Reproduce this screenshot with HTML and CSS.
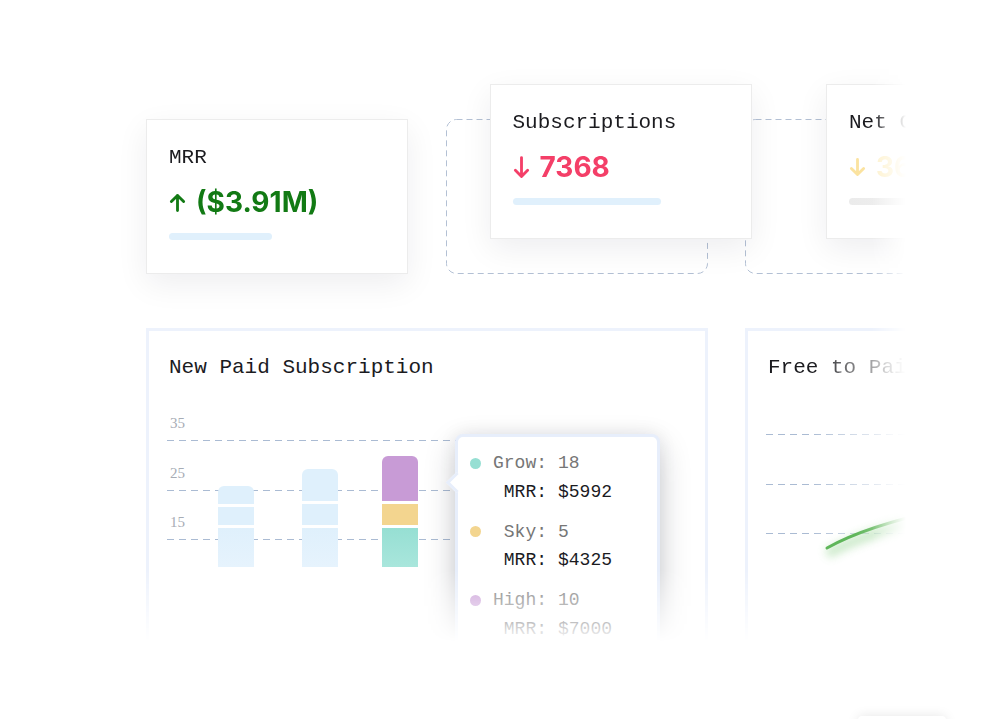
FILE: index.html
```html
<!DOCTYPE html>
<html lang="en">
<head>
    <meta charset="UTF-8">
    <meta name="viewport" content="width=device-width, initial-scale=1.0">
    <title>Subscription Metrics</title>
    <link rel="stylesheet" href="styles.css">
</head>
<body>
    <div class="scene">
        <div class="stat-row">
            <div class="stat-card">
                <p class="stat-title">MRR</p>
                <p class="stat-value up">
                    <svg class="arrow" viewBox="0 0 18 20"><path d="M9 18.5V2.5M2.5 9L9 2.5L15.5 9"/></svg>
                    ($3.91M)
                </p>
                <div class="stat-bar"></div>
            </div>

            <div class="slot">
                <svg class="slot-outline" width="262" height="155"><rect x="0.5" y="0.5" width="261" height="154" rx="10"/></svg>
                <div class="stat-card lifted">
                    <p class="stat-title">Subscriptions</p>
                    <p class="stat-value down">
                        <svg class="arrow tall" viewBox="0 0 18 24"><path d="M9 1.5V21.5M2.5 15L9 21.5L15.5 15"/></svg>
                        7368
                    </p>
                    <div class="stat-bar long"></div>
                </div>
            </div>

            <div class="slot">
                <svg class="slot-outline" width="262" height="155"><rect x="0.5" y="0.5" width="261" height="154" rx="10"/></svg>
                <div class="stat-card lifted far">
                    <p class="stat-title">Net Churn</p>
                    <p class="stat-value pale">
                        <svg class="arrow" viewBox="0 0 18 20"><path d="M9 1.5V17.5M2.5 11L9 17.5L15.5 11"/></svg>
                        <span>364</span>
                    </p>
                    <div class="stat-bar long grey"></div>
                </div>
            </div>
        </div>

        <div class="chart-row">
            <div class="chart-card wide">
                <h3 class="chart-title">New Paid Subscription</h3>
                <div class="plot">
                    <div class="gridlines short">
                        <div class="gridline"><span>35</span><i></i></div>
                        <div class="gridline"><span>25</span><i></i></div>
                        <div class="gridline"><span>15</span><i></i></div>
                    </div>
                    <div class="bars">
                        <div class="bar">
                            <div class="seg" style="height:18px"></div>
                            <div class="seg" style="height:18px"></div>
                            <div class="seg" style="height:39px"></div>
                        </div>
                        <div class="bar">
                            <div class="seg" style="height:32px"></div>
                            <div class="seg" style="height:21px"></div>
                            <div class="seg" style="height:39px"></div>
                        </div>
                        <div class="bar">
                            <div class="seg high" style="height:45px"></div>
                            <div class="seg sky" style="height:21px"></div>
                            <div class="seg grow" style="height:39px"></div>
                        </div>
                    </div>
                </div>

                <div class="tooltip">
                    <div class="tip-group">
                        <span class="dot grow"></span><span class="tip-label">Grow:</span><span class="tip-num">18</span>
                        <span></span><span class="tip-label dark">MRR:</span><span class="tip-num dark">$5992</span>
                    </div>
                    <div class="tip-group">
                        <span class="dot sky"></span><span class="tip-label">Sky:</span><span class="tip-num">5</span>
                        <span></span><span class="tip-label dark">MRR:</span><span class="tip-num dark">$4325</span>
                    </div>
                    <div class="tip-group">
                        <span class="dot high"></span><span class="tip-label">High:</span><span class="tip-num">10</span>
                        <span></span><span class="tip-label dark">MRR:</span><span class="tip-num dark">$7000</span>
                    </div>
                </div>
            </div>

            <div class="chart-card">
                <h3 class="chart-title fade-x">Free to Paid</h3>
                <div class="plot shifted">
                    <div class="gridlines fade-x">
                        <div class="gridline"><span></span><i></i></div>
                        <div class="gridline"><span></span><i></i></div>
                        <div class="gridline"><span></span><i></i></div>
                    </div>
                    <svg class="trend" width="240" height="153">
                        <defs>
                            <filter id="glow" x="-20%" y="-50%" width="140%" height="200%"><feGaussianBlur stdDeviation="4"/></filter>
                            <linearGradient id="trend-fade" x1="0" x2="1" y1="0" y2="0">
                                <stop offset="0.25" stop-color="#5fb65a"/>
                                <stop offset="0.75" stop-color="#b9dfb4"/>
                            </linearGradient>
                        </defs>
                        <path class="trend-glow" d="M61 146Q100 124 175 108" filter="url(#glow)"/>
                        <path class="trend-line" d="M61 140Q100 118 175 102"/>
                    </svg>
                </div>
            </div>
        </div>
    </div>

    <div class="peek"></div>
</body>
</html>
```

FILE: styles.css
```css
* {
    box-sizing: border-box;
}
body {
    margin: 0;
    background: #fff;
    overflow: hidden;
    font-family: "Liberation Mono", "DejaVu Sans Mono", monospace;
    color: #1b1b1f;
}
.scene {
    width: 1010px;
    padding: 119px 0 0 146px;
    -webkit-mask-image: linear-gradient(to right, #000 872px, transparent 906px);
    mask-image: linear-gradient(to right, #000 872px, transparent 906px);
}

/* stat cards */
.stat-row {
    display: grid;
    grid-template-columns: repeat(3, 262px);
    column-gap: 37.5px;
}
.stat-card {
    height: 155px;
    background: #fff;
    border: 1px solid #ececec;
    padding: 25px 0 0 22px;
    box-shadow: 0 10px 30px rgba(20, 20, 40, 0.07);
}
.stat-title {
    margin: 0;
    font-size: 21px;
    line-height: 25px;
}
.stat-value {
    margin: 15px 0 0;
    display: flex;
    align-items: center;
    gap: 10px;
    font-family: Inter, "Liberation Sans", sans-serif;
    font-weight: 700;
    font-size: 28px;
    line-height: 34px;
}
.arrow {
    width: 17px;
    height: 19px;
    fill: none;
    stroke: currentColor;
    stroke-width: 3;
    stroke-linecap: round;
    stroke-linejoin: round;
}
.arrow.tall {
    height: 23px;
}
.up {
    color: #127a14;
}
.down {
    color: #f43f68;
}
.pale {
    color: #fbe3a0;
}
.pale span {
    color: #fdf1cc;
}
.stat-bar {
    margin-top: 14px;
    width: 103px;
    height: 7px;
    border-radius: 4px;
    background: #e0f0fc;
}
.stat-bar.long {
    width: 148px;
}
.stat-bar.grey {
    background: linear-gradient(to right, #ebebeb, #f6f6f6);
}
.slot {
    position: relative;
    height: 155px;
}
.slot-outline {
    position: absolute;
    top: 0;
    left: 0;
    overflow: visible;
}
.slot-outline rect {
    fill: none;
    stroke: #b3c0d4;
    stroke-dasharray: 6 4;
}
.lifted {
    position: relative;
    top: -35px;
    left: 44px;
    z-index: 2;
}
.lifted.far {
    left: 81px;
}

/* charts */
.chart-row {
    display: grid;
    grid-template-columns: repeat(3, 262px);
    column-gap: 37.5px;
    margin-top: 54px;
    -webkit-mask-image: linear-gradient(to bottom, #000 242px, transparent 314px);
    mask-image: linear-gradient(to bottom, #000 242px, transparent 314px);
}
.chart-card {
    position: relative;
    height: 330px;
    background: #fff;
    border: 3px solid #edf2fc;
    padding: 24px 18px 0;
}
.chart-card.wide {
    grid-column: span 2;
}
.chart-title {
    margin: 0 0 0 2px;
    font-size: 21px;
    line-height: 25px;
    font-weight: 400;
}
.fade-x {
    -webkit-mask-image: linear-gradient(to right, #000 45px, rgba(0, 0, 0, 0.45) 95px, rgba(0, 0, 0, 0.2) 140px);
    mask-image: linear-gradient(to right, #000 45px, rgba(0, 0, 0, 0.45) 95px, rgba(0, 0, 0, 0.2) 140px);
}
.plot {
    position: relative;
    margin-top: 34px;
    height: 153px;
}
.plot.shifted {
    margin-top: 28px;
}
.gridlines {
    position: absolute;
    top: 0;
    left: 0;
    right: 0;
}
.gridlines.short {
    right: 120px;
}
.gridline {
    height: 49.5px;
}
.gridline span {
    display: block;
    height: 18px;
    margin-bottom: 8px;
    padding-left: 3px;
    font-family: "Liberation Serif", serif;
    font-size: 15px;
    line-height: 18px;
    color: #a7acb5;
}
.gridline i {
    display: block;
    height: 1px;
    background: repeating-linear-gradient(to right, #aabbd3 0 7px, transparent 7px 12px);
}
.bars {
    position: relative;
    height: 100%;
    display: flex;
    align-items: flex-end;
    padding-left: 51px;
}
.bar {
    width: 36px;
    display: flex;
    flex-direction: column;
    gap: 3px;
}
.bar:nth-child(2) {
    margin-left: 48px;
}
.bar:nth-child(3) {
    margin-left: 44px;
}
.seg {
    background: #dff0fc;
}
.seg:first-child {
    border-radius: 6px 6px 0 0;
}
.seg:last-child {
    background: linear-gradient(#dff0fc, #e6f3fd);
}
.seg.high {
    background: #c89bd6;
}
.seg.sky {
    background: #f3d58f;
}
.seg.grow {
    background: linear-gradient(#96dfd3, #a9e6dc);
}

/* tooltip */
.tooltip {
    position: absolute;
    left: 306px;
    top: 103px;
    width: 205px;
    height: 260px;
    background: #fff;
    border: 3px solid #e7eefb;
    border-radius: 8px;
    padding: 12px 0 0 12px;
    box-shadow: 0 12px 32px rgba(20, 25, 40, 0.2), 0 0 18px rgba(20, 25, 40, 0.08);
    z-index: 3;
    font-size: 18px;
}
.tooltip::before {
    content: "";
    position: absolute;
    left: -9px;
    top: 38px;
    width: 12px;
    height: 12px;
    background: #fff;
    border-left: 3px solid #e7eefb;
    border-bottom: 3px solid #e7eefb;
    transform: rotate(45deg);
}
.tip-group {
    display: grid;
    grid-template-columns: 12px 54px auto;
    column-gap: 11px;
    align-items: center;
    line-height: 28.5px;
}
.tip-group + .tip-group {
    margin-top: 11.5px;
}
.tip-label {
    text-align: right;
    color: #767676;
}
.tip-num {
    color: #767676;
}
.dark {
    color: #1b1b1f;
}
.dot {
    width: 11px;
    height: 11px;
    border-radius: 50%;
}
.dot.grow {
    background: #96dfd3;
}
.dot.sky {
    background: #f3d58f;
}
.dot.high {
    background: #c89bd6;
}

/* free to paid trend */
.trend {
    position: absolute;
    top: 0;
    left: 0;
    overflow: visible;
}
.trend-line {
    fill: none;
    stroke: url(#trend-fade);
    stroke-width: 3;
    stroke-linecap: round;
}
.trend-glow {
    fill: none;
    stroke: #8fd18a;
    stroke-width: 10;
    opacity: 0.45;
}

.peek {
    margin: 58px 0 0 858px;
    width: 88px;
    height: 40px;
    background: #fff;
    border-radius: 4px;
    box-shadow: 0 0 12px rgba(0, 0, 0, 0.1);
}
```
